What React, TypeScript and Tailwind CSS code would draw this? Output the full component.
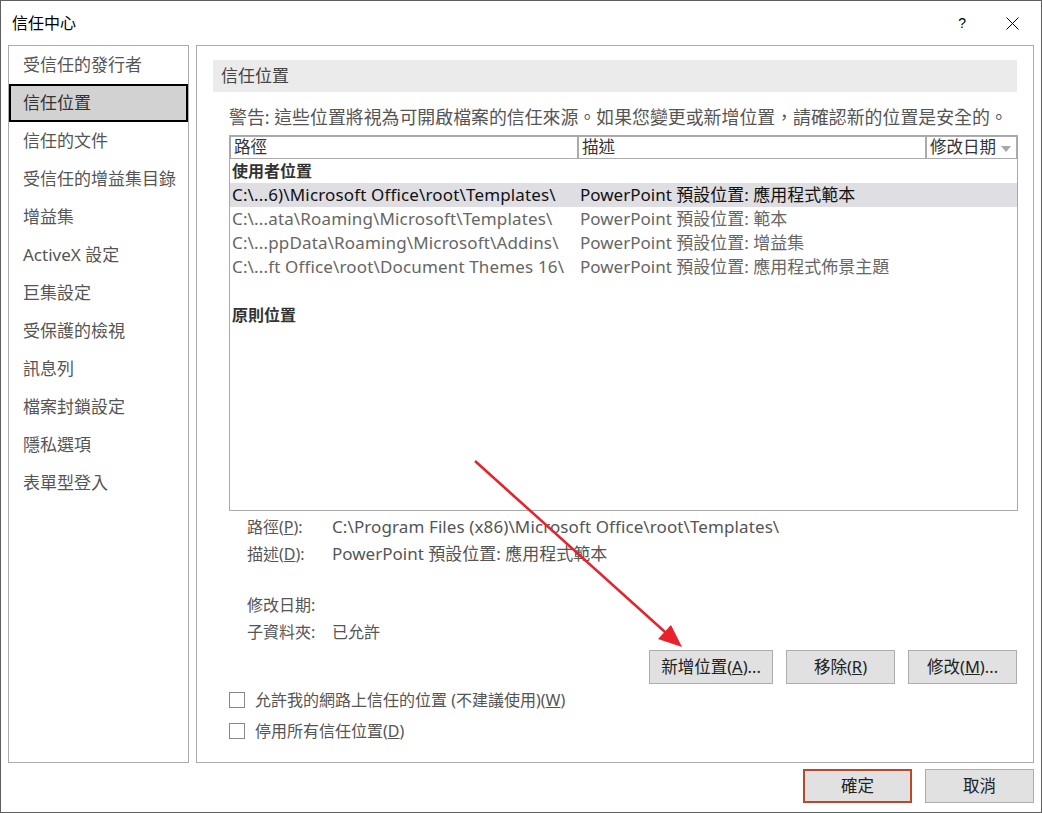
import React from "react";

const FONT = { fontFamily: '"Noto Sans", "Noto Sans CJK TC", sans-serif' };

const navItems = [
  "受信任的發行者",
  "信任位置",
  "信任的文件",
  "受信任的增益集目錄",
  "增益集",
  "ActiveX 設定",
  "巨集設定",
  "受保護的檢視",
  "訊息列",
  "檔案封鎖設定",
  "隱私選項",
  "表單型登入",
];

const rows = [
  { path: "C:\\...6)\\Microsoft Office\\root\\Templates\\", desc: "PowerPoint 預設位置: 應用程式範本", selected: true },
  { path: "C:\\...ata\\Roaming\\Microsoft\\Templates\\", desc: "PowerPoint 預設位置: 範本" },
  { path: "C:\\...ppData\\Roaming\\Microsoft\\Addins\\", desc: "PowerPoint 預設位置: 增益集" },
  { path: "C:\\...ft Office\\root\\Document Themes 16\\", desc: "PowerPoint 預設位置: 應用程式佈景主題" },
];

export default function App() {
  return (
    <div
      className="relative w-[1042px] h-[813px] bg-white border border-[#5f5f5f] box-border flex flex-col text-[#444] overflow-hidden"
      style={FONT}
    >
      {/* Title bar */}
      <div className="h-[44px] flex items-center pl-[11px] pr-[20px] shrink-0">
        <div className="text-[16px] text-black leading-none">信任中心</div>
        <div className="ml-auto flex items-center">
          <span className="text-[14px] text-black mr-[40px] leading-none" style={{ fontFamily: '"Liberation Sans", sans-serif' }}>?</span>
          <svg width="13" height="13" viewBox="0 0 13 13" className="mr-[2px]">
            <path d="M0.5 0.5 L12.5 12.5 M12.5 0.5 L0.5 12.5" stroke="#000" strokeWidth="1" />
          </svg>
        </div>
      </div>

      {/* Panels */}
      <div className="flex pl-[7px] gap-[7px] h-[718px] shrink-0">
        {/* Left nav */}
        <div className="w-[181px] h-full border border-[#ababab] flex flex-col">
          {navItems.map((t) =>
            t === "信任位置" ? (
              <div
                key={t}
                className="h-[38px] border-2 border-black bg-[#d2d2d2] flex items-center pl-[12px] text-[17px] text-[#333]"
              >
                {t}
              </div>
            ) : (
              <div key={t} className="h-[38px] flex items-center pl-[14px] text-[17px] text-[#555]">
                {t}
              </div>
            )
          )}
        </div>

        {/* Right panel */}
        <div className="w-[838px] h-full border border-[#ababab] flex flex-col pt-[14px] px-[16px]">
          <div className="h-[32px] bg-[#ebebeb] flex items-center pl-[8px] text-[17px] text-[#444]">信任位置</div>

          <div className="pl-[16px] pt-[14px] text-[17.9px] text-[#555] leading-[22px] whitespace-nowrap">
            警告: 這些位置將視為可開啟檔案的信任來源。如果您變更或新增位置，請確認新的位置是安全的。
          </div>

          {/* Table */}
          <div className="ml-[16px] mt-[7px] w-[789px] h-[376px] border border-[#a9a9a9] flex flex-col">
            <div className="h-[23px] bg-[#ababab] flex gap-[2px] p-[1px] shrink-0">
              <div className="w-[346px] bg-white flex items-center pl-[3px] text-[16.5px] text-[#333]">路徑</div>
              <div className="w-[346px] bg-white flex items-center pl-[3px] text-[16.5px] text-[#333]">描述</div>
              <div className="flex-1 bg-white flex items-center pl-[3px] text-[16.5px] text-[#333]">
                修改日期
                <svg width="10" height="6" viewBox="0 0 10 6" className="ml-[5px] mt-[2px]">
                  <path d="M0 0 L10 0 L5 6 Z" fill="#a8a8a8" />
                </svg>
              </div>
            </div>
            <div className="h-[24px] flex items-center pl-[2px] text-[16px] font-bold text-[#333]">使用者位置</div>
            {rows.map((r) => (
              <div
                key={r.path}
                className={`h-[24px] flex items-center text-[17px] whitespace-nowrap ${r.selected ? "bg-[#dedee3] text-[#111]" : "text-[#666]"}`}
              >
                <div className="w-[349px] pl-[2px] tracking-[0.15px]">{r.path}</div>
                <div className="pl-[1px]">{r.desc}</div>
              </div>
            ))}
            <div className="h-[24px]" />
            <div className="h-[24px] flex items-center pl-[2px] text-[16px] font-bold text-[#333]">原則位置</div>
          </div>

          {/* Details */}
          <div className="ml-[34px] mt-[2px] text-[17px] text-[#555] flex flex-col">
            <div className="h-[27px] flex items-center">
              <span className="w-[85px] text-[16px]">路徑(<span className="underline">P</span>):</span>
              <span className="tracking-[0.1px]">C:\Program Files (x86)\Microsoft Office\root\Templates\</span>
            </div>
            <div className="h-[27px] flex items-center">
              <span className="w-[85px] text-[16px]">描述(<span className="underline">D</span>):</span>
              <span>PowerPoint 預設位置: 應用程式範本</span>
            </div>
            <div className="h-[24px]" />
            <div className="h-[27px] flex items-center">
              <span className="w-[85px] text-[16px]">修改日期:</span>
              <span></span>
            </div>
            <div className="h-[28px] flex items-center">
              <span className="w-[85px] text-[16px]">子資料夾:</span>
              <span className="text-[16px]">已允許</span>
            </div>
          </div>

          {/* Buttons */}
          <div className="flex justify-end gap-[13px] mt-[4px]">
            <button className="w-[124px] h-[34px] bg-[#e1e1e1] border border-[#adadad] text-[16.5px] text-[#222]">
              新增位置(<span className="underline">A</span>)...
            </button>
            <button className="w-[109px] h-[34px] bg-[#e1e1e1] border border-[#adadad] text-[16.5px] text-[#222]">
              移除(<span className="underline">R</span>)
            </button>
            <button className="w-[109px] h-[34px] bg-[#e1e1e1] border border-[#adadad] text-[16.5px] text-[#222]">
              修改(<span className="underline">M</span>)...
            </button>
          </div>

          {/* Checkboxes */}
          <div className="ml-[16px] mt-[8px] flex flex-col gap-[15px] text-[16px] text-[#555]">
            <div className="flex items-center h-[16px]">
              <div className="w-[16px] h-[16px] border border-[#888] bg-white mr-[10px]" />
              <span>允許我的網路上信任的位置 (不建議使用)(<span className="underline">W</span>)</span>
            </div>
            <div className="flex items-center h-[16px]">
              <div className="w-[16px] h-[16px] border border-[#888] bg-white mr-[10px]" />
              <span>停用所有信任位置(<span className="underline">D</span>)</span>
            </div>
          </div>
        </div>
      </div>

      {/* Footer buttons */}
      <div className="flex justify-end gap-[13px] pr-[7px] pt-[6px]">
        <button className="w-[109px] h-[34px] bg-[#e1e1e1] border-2 border-[#c0462b] text-[16.5px] text-[#222]">確定</button>
        <button className="w-[109px] h-[34px] bg-[#e1e1e1] border border-[#adadad] text-[16.5px] text-[#222]">取消</button>
      </div>

      {/* Red arrow annotation */}
      <svg className="absolute left-0 top-0 pointer-events-none" width="1042" height="813">
        <line x1="474" y1="460" x2="664" y2="631" stroke="#e8212b" strokeWidth="2.5" />
        <path d="M681 646 L657 638 L670 624 Z" fill="#e8212b" />
      </svg>
    </div>
  );
}
